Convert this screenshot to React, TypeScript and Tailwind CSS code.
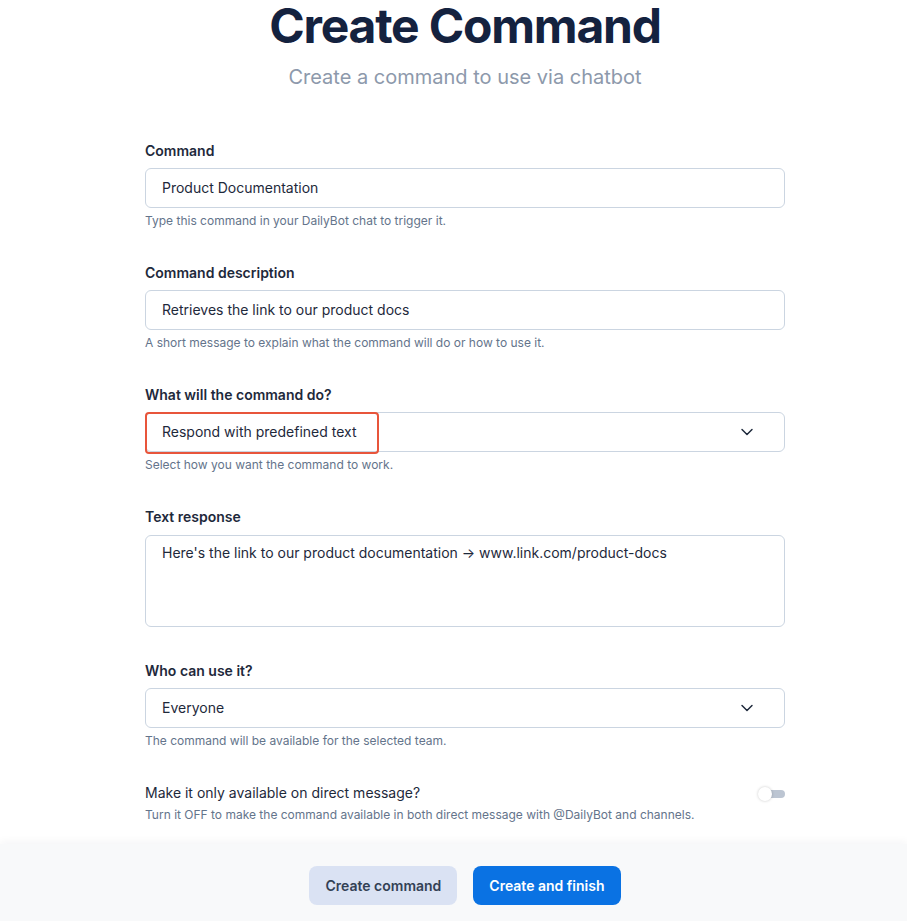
import { ChevronDown } from 'lucide-react'
import type { ReactNode } from 'react'

function Field({ label, help, children }: { label: string; help: string; children: ReactNode }) {
  return (
    <div className="flex flex-col">
      <label className="text-sm font-semibold text-[#1e293b] leading-5">{label}</label>
      <div className="mt-[7px]">{children}</div>
      <p className="mt-[5px] text-xs text-[#64748b] leading-4">{help}</p>
    </div>
  )
}

function Input({ value }: { value: string }) {
  return (
    <div className="h-10 rounded-md border border-[#cbd5e1] bg-white px-4 flex items-center text-sm text-[#1e293b]">
      {value}
    </div>
  )
}

function Select({ value, highlight }: { value: string; highlight?: boolean }) {
  return (
    <div className="relative h-10 rounded-md border border-[#cbd5e1] bg-white px-4 flex items-center justify-between text-sm text-[#1e293b]">
      <span>{value}</span>
      <ChevronDown className="w-5 h-5 text-[#1e293b] mr-[11px]" strokeWidth={1.75} />
      {highlight && (
        <div className="absolute -left-px -top-px w-[234px] h-[42px] rounded-[4px] border-2 border-[#e8553b]" />
      )}
    </div>
  )
}

export default function App() {
  return (
    <div className="h-screen flex flex-col bg-white font-['Inter',sans-serif] overflow-hidden">
      <div className="flex-1 flex flex-col items-center pl-[23px]">
        <h1 className="mt-[2px] text-5xl leading-[48px] font-bold text-[#14223f] tracking-tight">Create Command</h1>
        <p className="mt-[13px] text-xl leading-7 text-[#8d99ab]">Create a command to use via chatbot</p>

        <div className="w-[640px] mt-[50px] flex flex-col gap-[34px]">
          <Field label="Command" help="Type this command in your DailyBot chat to trigger it.">
            <Input value="Product Documentation" />
          </Field>
          <Field label="Command description" help="A short message to explain what the command will do or how to use it.">
            <Input value="Retrieves the link to our product docs" />
          </Field>
          <Field label="What will the command do?" help="Select how you want the command to work.">
            <Select value="Respond with predefined text" highlight />
          </Field>
          <div className="flex flex-col">
            <label className="text-sm font-semibold text-[#1e293b] leading-5">Text response</label>
            <div className="mt-2 h-[92px] rounded-md border border-[#cbd5e1] bg-white px-4 pt-[7px] text-sm leading-5 text-[#1e293b]">
              Here's the link to our product documentation → www.link.com/product-docs
            </div>
          </div>
          <Field label="Who can use it?" help="The command will be available for the selected team.">
            <Select value="Everyone" />
          </Field>
          <div className="flex items-start justify-between">
            <div className="flex flex-col">
              <span className="text-sm text-[#1e293b] leading-5">Make it only available on direct message?</span>
              <span className="mt-[4px] text-xs text-[#64748b] leading-4">
                Turn it OFF to make the command available in both direct message with @DailyBot and channels.
              </span>
            </div>
            <div className="relative w-[23px] h-[8px] mt-[7px] rounded-full bg-[#bcc5d2]">
              <div className="absolute -left-[4px] -top-[3px] w-[14px] h-[14px] rounded-full bg-white shadow-[0_0_3px_rgba(0,0,0,0.22)]" />
            </div>
          </div>
        </div>
      </div>

      <div className="h-[77px] shrink-0 bg-[#f8f9fa] shadow-[0_-3px_8px_rgba(15,23,42,0.04)] flex items-start pt-[22px] justify-center gap-4 pl-[23px]">
        <button className="h-[39px] px-4 rounded-lg bg-[#dae2f3] text-sm font-semibold text-[#334155] whitespace-nowrap">
          Create command
        </button>
        <button className="h-[39px] px-4 rounded-lg bg-[#0a72e3] text-sm font-semibold text-white whitespace-nowrap">
          Create and finish
        </button>
      </div>
    </div>
  )
}
